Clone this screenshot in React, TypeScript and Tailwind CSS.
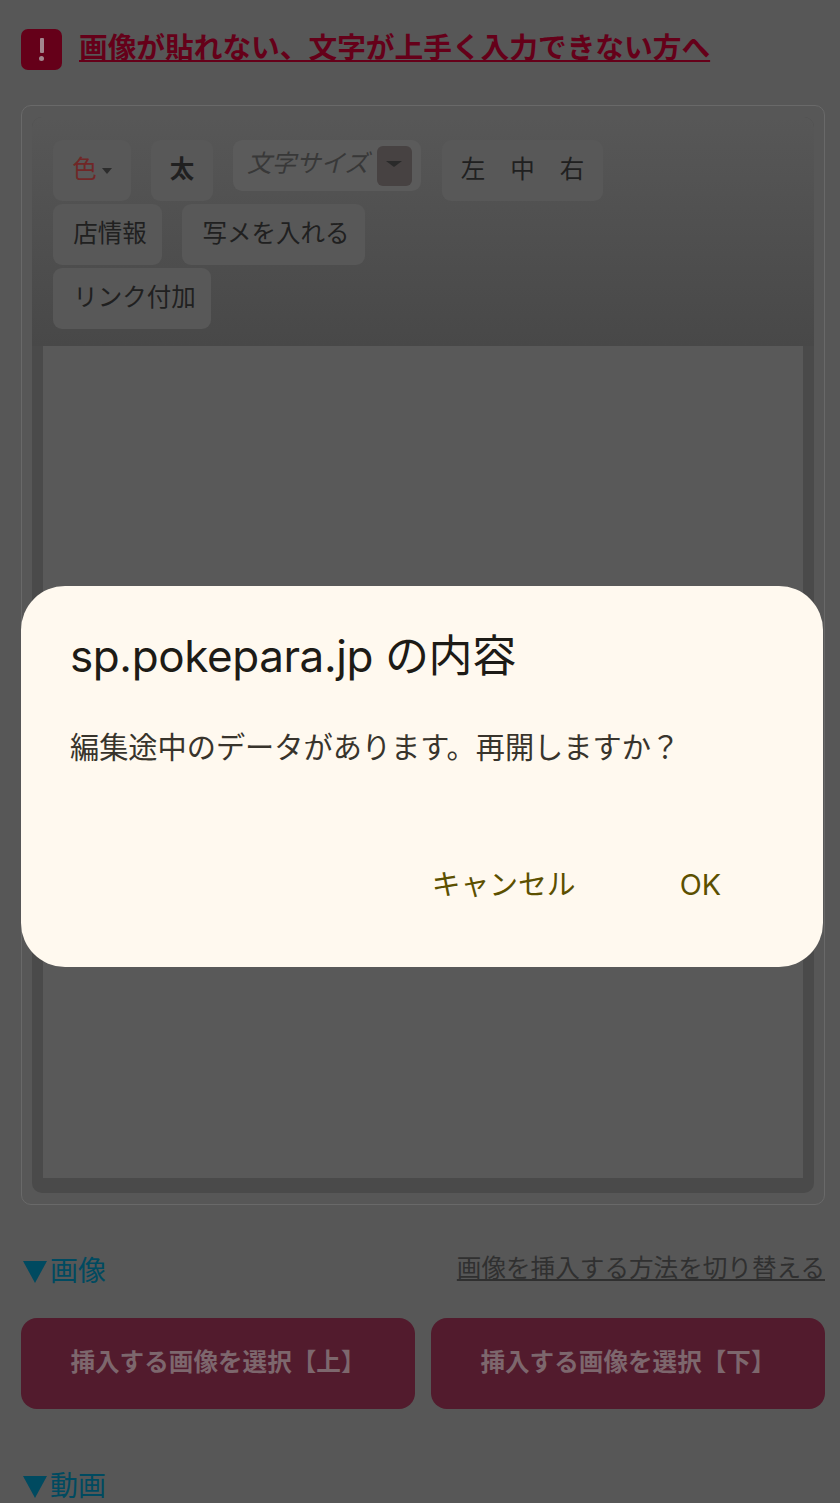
const jp = "font-['Roboto','Noto_Sans_CJK_JP',sans-serif]";

function ToolButton({ children, className = "" }: { children: React.ReactNode; className?: string }) {
  return (
    <div className={`flex h-[61px] items-center justify-center rounded-[9px] bg-[#585858] text-[24.5px] leading-none text-[#202020] ${className}`}>
      {children}
    </div>
  );
}

function ImageButton({ label }: { label: string }) {
  return (
    <div className="flex h-[91px] flex-1 items-center justify-center rounded-[16px] bg-[#521b2d] text-[24.6px] font-bold text-[#7d676d]">
      {label}
    </div>
  );
}

function Triangle() {
  return <span className="ml-[2px] mr-[3px] h-0 w-0 border-x-[12px] border-t-[22px] border-x-transparent border-t-[#004a60]" />;
}

export default function App() {
  return (
    <div className={`relative h-[1503px] w-[840px] overflow-hidden bg-[#575757] ${jp}`}>
      <div className="flex h-[105px] items-start pl-[21px] pt-[29px]">
        <div className="flex h-[41px] w-[41px] flex-col items-center justify-center gap-[3px] rounded-[7px] bg-[#650019]">
          <span className="h-[15px] w-[4px] rounded-[1px] bg-[#a3868e]" />
          <span className="h-[5px] w-[5px] rounded-full bg-[#a3868e]" />
        </div>
        <a className="ml-[17px] mt-[-1px] whitespace-nowrap text-[28.7px] font-bold leading-[40px] text-[#650019] underline">
          画像が貼れない、文字が上手く入力できない方へ
        </a>
      </div>

      <div className="mx-[21px] h-[1100px] w-[804px] rounded-[10px] border border-[#696969] px-[10px] py-[11px]">
        <div className="flex h-[1076px] flex-col rounded-[10px] bg-[#4a4a4a]">
          <div className="flex h-[229px] flex-col gap-[3px] rounded-t-[10px] bg-gradient-to-b from-[#575757] to-[#484848] pl-[21px] pt-[23px]">
            <div className="flex items-start">
              <ToolButton className="w-[78px] gap-[5px]">
                <span className="text-[#702727]">色</span>
                <span className="h-0 w-0 border-x-[5px] border-t-[6px] border-x-transparent border-t-[#2c2c2c]" />
              </ToolButton>
              <ToolButton className="ml-[20px] w-[62px] font-bold">太</ToolButton>
              <div className="ml-[20px] flex h-[51px] w-[188px] items-start rounded-[9px] bg-[#5b5b5b] pl-[14px] pt-[8px]">
                <span className="text-[24.5px] italic leading-[32px] text-[#383838]">文字サイズ</span>
                <div className="ml-[8px] mt-[-2px] flex h-[40px] w-[35px] items-start justify-center rounded-[6px] bg-[#474242] pt-[15px]">
                  <span className="h-0 w-0 border-x-[8px] border-t-[6px] border-x-transparent border-t-[#2a2a2a]" />
                </div>
              </div>
              <ToolButton className="ml-[21px] w-[161px] gap-[25px]">
                <span>左</span>
                <span>中</span>
                <span>右</span>
              </ToolButton>
            </div>
            <div className="flex gap-[20px]">
              <ToolButton className="w-[109px] pl-[5px]">店情報</ToolButton>
              <ToolButton className="w-[183px] pl-[5px]">写メを入れる</ToolButton>
            </div>
            <div className="flex">
              <ToolButton className="w-[158px] pl-[5px]">リンク付加</ToolButton>
            </div>
          </div>
          <div className="mx-[11px] h-[832px] bg-[#595959]" />
        </div>
      </div>

      <div className="mx-[21px] mt-[42px] flex h-[71px] w-[804px] items-start justify-between">
        <div className="flex items-center pt-[4px] text-[28px] leading-[42px] text-[#004a60]">
          <Triangle />
          <span>画像</span>
        </div>
        <a className="pt-[4px] text-[24.6px] leading-[36px] text-[#303030] underline">画像を挿入する方法を切り替える</a>
      </div>

      <div className="mx-[21px] flex w-[804px] gap-[16px]">
        <ImageButton label="挿入する画像を選択【上】" />
        <ImageButton label="挿入する画像を選択【下】" />
      </div>

      <div className="ml-[21px] mt-[57px] flex items-center text-[28px] leading-[42px] text-[#004a60]">
        <Triangle />
        <span>動画</span>
      </div>

      <div className="absolute left-[21px] top-[586px] flex h-[381px] w-[802px] flex-col rounded-[44px] bg-[#fff9ef] pl-[49px] pr-[102px] font-['Inter','Noto_Sans_CJK_JP',sans-serif]">
        <h2 className="mt-[41px] whitespace-nowrap text-[44px] font-normal leading-[58px] tracking-[-0.4px] text-[#1d1b16]">sp.pokepara.jp の内容</h2>
        <p className="mt-[43px] whitespace-nowrap text-[29.2px] leading-[40px] text-[#38342c]">編集途中のデータがあります。再開しますか？</p>
        <div className="mt-[97px] flex justify-end gap-[104px] text-[28.8px] leading-[40px] text-[#5c5000]">
          <span>キャンセル</span>
          <span>OK</span>
        </div>
      </div>
    </div>
  );
}
